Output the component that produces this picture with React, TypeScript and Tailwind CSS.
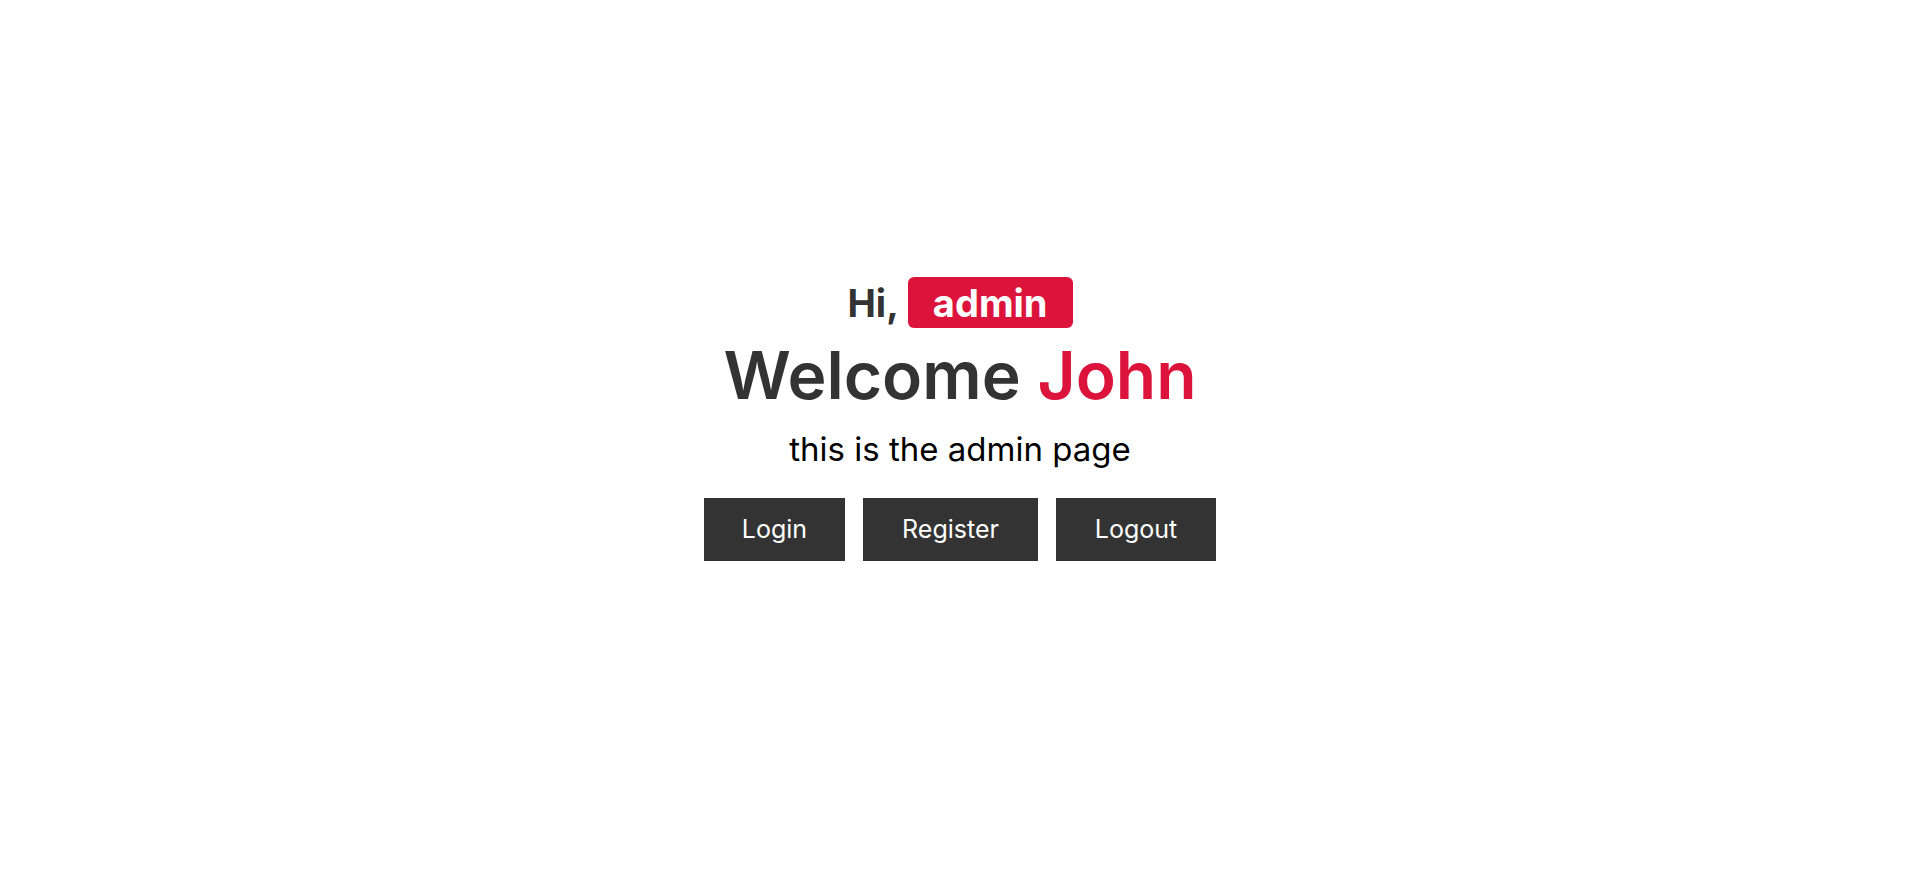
import React from 'react';

const buttons = [
    { label: 'Login', width: 'w-[141px]' },
    { label: 'Register', width: 'w-[175px]' },
    { label: 'Logout', width: 'w-[160px]' },
];

export default function App() {
    return (
        <div className="min-h-screen bg-white flex flex-col items-center pt-[277px] font-['Inter',sans-serif]">
            {/* greeting */}
            <div className="flex items-center gap-[9px] text-[38px] leading-none font-bold text-[#333333]">
                <span>Hi,</span>
                <span className="h-[51px] px-[25px] flex items-center rounded-md bg-[#dc143c] text-white">admin</span>
            </div>
            <h1 className="mt-[14px] text-[66px] leading-none font-semibold text-[#333333]">
                Welcome <span className="text-[#dc143c]">John</span>
            </h1>
            <p className="mt-[25px] text-[33px] leading-none text-black">this is the admin page</p>
            <div className="mt-[32px] flex gap-[18px]">
                {buttons.map((b) => (
                    <button
                        key={b.label}
                        className={`${b.width} h-[63px] bg-[#333333] text-white text-[25px] flex items-center justify-center`}
                    >
                        {b.label}
                    </button>
                ))}
            </div>
        </div>
    );
}
